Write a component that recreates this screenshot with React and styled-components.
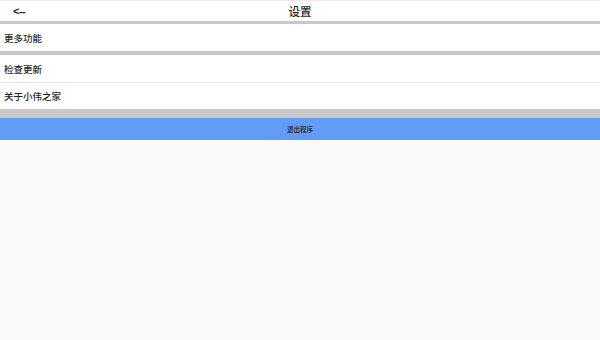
import React from 'react';
import styled, { createGlobalStyle } from 'styled-components';

const Global = createGlobalStyle`
    html, body {
        margin: 0;
        padding: 0;
        background: #f9f9f9;
        font-family: "Noto Sans CJK SC", "Liberation Sans", sans-serif;
        color: #1e1e1e;
    }
`

const Page = styled.div`
    width: 600px;
    min-height: 340px;
    background: #f9f9f9;
    display: flex;
    flex-direction: column;
`

const Header = styled.div`
    height: 20px;
    border-top: 1px solid #ececec;
    background: #fff;
    display: grid;
    grid-template-columns: 60px 1fr 60px;
    align-items: center;
    border-bottom: 3px solid #c8c8c8;
`

const Back = styled.span`
    padding-left: 13px;
    font-family: "Liberation Sans", sans-serif;
    font-size: 11px;
    font-weight: bold;
    letter-spacing: -0.5px;
`

const Title = styled.span`
    text-align: center;
    font-size: 11.5px;
    font-weight: 500;
`

const Row = styled.div`
    height: ${props => props.h}px;
    background: #fff;
    display: flex;
    align-items: center;
    padding-left: 4px;
    font-size: 9.5px;
    font-weight: 500;
    border-bottom: ${props => props.gap ? `${props.gap}px solid #c8c8c8` : '1px solid #e6e6e6'};
`

const Exit = styled.div`
    height: 22px;
    background: #639cf4;
    display: flex;
    align-items: center;
    justify-content: center;
    font-size: 6.5px;
    font-weight: 500;
    color: #1a1a1a;
`

const App = () => (
    <Page>
        <Global />
        <Header>
            <Back>&lt;--</Back>
            <Title>设置</Title>
            <span />
        </Header>
        <Row h={27} gap={4}>更多功能</Row>
        <Row h={27}>检查更新</Row>
        <Row h={26} gap={9}>关于小伟之家</Row>
        <Exit>退出程序</Exit>
    </Page>
)

export default App;
